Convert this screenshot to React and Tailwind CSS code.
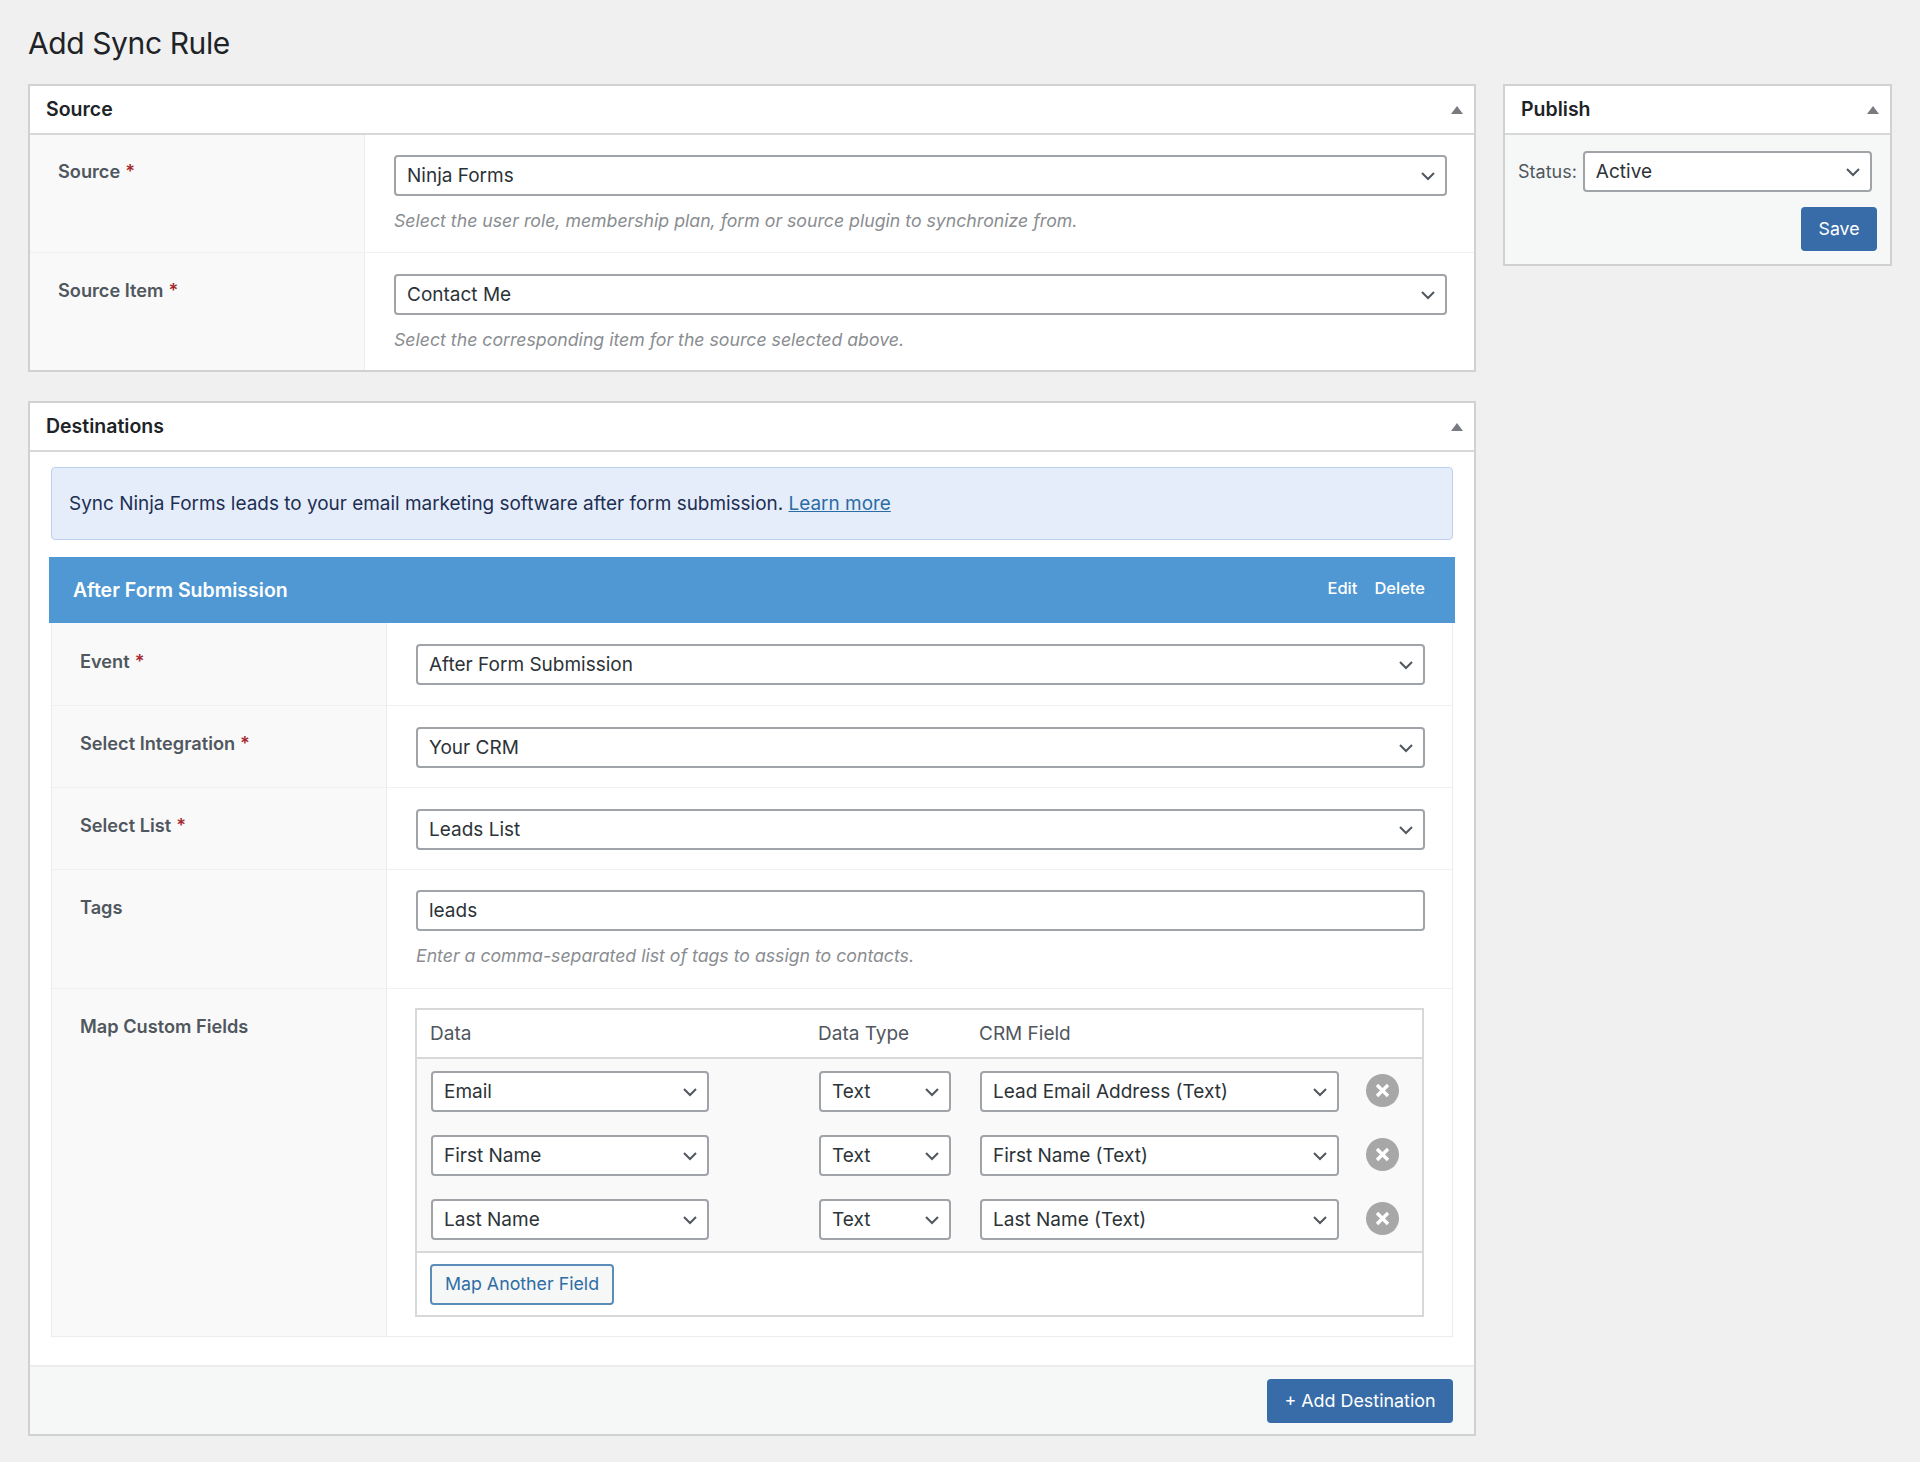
import React from 'react';

const Chevron = () => (
  <svg width="16" height="10" viewBox="0 0 16 10" fill="none" className="shrink-0">
    <path d="M2 2l6 6 6-6" stroke="#50575e" strokeWidth="2" />
  </svg>
);

const Triangle = () => (
  <svg width="12" height="8" viewBox="0 0 12 8" className="shrink-0">
    <path d="M6 0l6 8H0z" fill="#787c82" />
  </svg>
);

const Select = ({ value, className = '' }) => (
  <div className={`flex h-[41px] items-center justify-between rounded-[4px] border-2 border-[#a0a3a7] bg-white pl-[11px] pr-[9px] text-[19px] text-[#2c3338] ${className}`}>
    <span className="translate-y-px">{value}</span>
    <Chevron />
  </div>
);

const Help = ({ children }) => (
  <p className="mt-[15px] text-[17.7px] leading-[20px] text-[#8a8d91] italic">{children}</p>
);

const Label = ({ text, required }) => (
  <span className="block text-[18.2px] leading-[20px] font-semibold text-[#50575e]">
    {text}
    {required && <span className="ml-[5px] text-[#a4272d]">*</span>}
  </span>
);

const Row = ({ label, required, children, last, labelTop = 'pt-[27px]', pad = 'pt-[21px] pb-[19px]' }) => (
  <div className={`flex ${last ? '' : 'border-b border-[#f0f0f1]'}`}>
    <div className={`w-[335px] shrink-0 border-r border-[#ececed] bg-[#f9f9f9] pl-[28px] ${labelTop}`}>
      <Label text={label} required={required} />
    </div>
    <div className={`min-w-0 flex-1 pl-[29px] pr-[27px] ${pad}`}>{children}</div>
  </div>
);

const Card = ({ title, children, className = '' }) => (
  <div className={`border-2 border-[#d0d1d3] bg-white ${className}`}>
    <div className="flex h-[49px] items-center justify-between border-b-2 border-[#d7d8da] pl-[16px] pr-[11px]">
      <h2 className="text-[19.5px] font-semibold text-[#1d2327]">{title}</h2>
      <Triangle />
    </div>
    {children}
  </div>
);

const RemoveIcon = () => (
  <svg width="33" height="33" viewBox="0 0 33 33" className="shrink-0 -translate-y-[1px]">
    <circle cx="16.5" cy="16.5" r="16.5" fill="#a7a7a7" />
    <path d="M11 11l11 11M22 11L11 22" stroke="#fff" strokeWidth="3.4" />
  </svg>
);

const mappings = [
  { data: 'Email', crm: 'Lead Email Address (Text)' },
  { data: 'First Name', crm: 'First Name (Text)' },
  { data: 'Last Name', crm: 'Last Name (Text)' },
];

const App = () => {
  return (
    <div className="min-h-[1462px] bg-[#f0f0f1] pl-[28px] pr-[28px] pt-[24px] font-['Inter',sans-serif]">
      <h1 className="mb-[22px] h-[38px] text-[30px] leading-[38px] tracking-[-0.4px] text-[#1d2327]">Add Sync Rule</h1>

      <div className="flex items-start gap-[27px]">
        <div className="flex w-[1448px] shrink-0 flex-col gap-[29px]">
          <Card title="Source">
            <Row label="Source" required labelTop="pt-[26px]" pad="pt-[20px] pb-[21px]">
              <Select value="Ninja Forms" />
              <Help>Select the user role, membership plan, form or source plugin to synchronize from.</Help>
            </Row>
            <Row label="Source Item" required last pad="pt-[21px] pb-[20px]">
              <Select value="Contact Me" />
              <Help>Select the corresponding item for the source selected above.</Help>
            </Row>
          </Card>

          <Card title="Destinations">
            <div className="px-[21px] pt-[15px] pb-[28px]">
              <div className="flex h-[73px] items-center rounded-[4px] border border-[#bccfee] bg-[#e5edfb] px-[17px] pt-px text-[18.95px] text-[#1d2f52]">
                <span>
                  Sync Ninja Forms leads to your email marketing software after form submission.{' '}
                  <a href="#" className="text-[#2b6ca3] underline">Learn more</a>
                </span>
              </div>

              <div className="-mx-[2px] mt-[17px] flex h-[66px] items-center justify-between bg-[#4f98d3] pl-[24px] pr-[30px] text-white">
                <span className="translate-y-px text-[19.5px] font-semibold">After Form Submission</span>
                <div className="flex -translate-y-[2px] gap-[17px] text-[16.5px] font-medium">
                  <span>Edit</span>
                  <span>Delete</span>
                </div>
              </div>

              <div className="border-x border-b border-[#ececed]">
                <Row label="Event" required labelTop="pt-[28px]" pad="pt-[21px] pb-[20px]">
                  <Select value="After Form Submission" />
                </Row>
                <Row label="Select Integration" required>
                  <Select value="Your CRM" />
                </Row>
                <Row label="Select List" required>
                  <Select value="Leads List" />
                </Row>
                <Row label="Tags" pad="pt-[20px] pb-[22px]">
                  <div className="flex h-[41px] items-center rounded-[4px] border-2 border-[#a0a3a7] bg-white pl-[11px] text-[19px] text-[#2c3338]">
                    <span className="translate-y-px">leads</span>
                  </div>
                  <Help>Enter a comma-separated list of tags to assign to contacts.</Help>
                </Row>
                <Row label="Map Custom Fields" last pad="pt-[19px] pb-[19px]">
                  <div className="w-[1009px] -translate-x-px border-2 border-[#d7d8da]">
                    <div className="flex h-[49px] items-center border-b-2 border-[#d7d8da] pt-px text-[19px] text-[#50575e]">
                      <span className="w-[401px] pl-[13px]">Data</span>
                      <span className="w-[161px]">Data Type</span>
                      <span>CRM Field</span>
                    </div>
                    <div className="flex flex-col gap-[23px] bg-[#f9f9f9] px-[14px] pt-[12px] pb-[11px]">
                      {mappings.map((m) => (
                        <div key={m.data} className="flex items-center">
                          <Select value={m.data} className="w-[278px]" />
                          <Select value="Text" className="ml-[110px] w-[132px]" />
                          <Select value={m.crm} className="ml-[29px] w-[359px]" />
                          <div className="ml-[27px]">
                            <RemoveIcon />
                          </div>
                        </div>
                      ))}
                    </div>
                    <div className="h-[64px] border-t-2 border-[#d7d8da] pl-[13px] pt-[11px]">
                      <button className="h-[41px] w-[184px] rounded-[4px] border-2 border-[#5c8db8] bg-[#f6f7f7] text-[17.8px] text-[#2f6da4]">Map Another Field</button>
                    </div>
                  </div>
                </Row>
              </div>
            </div>

            <div className="flex h-[69px] items-start justify-end border-t-2 border-[#ececed] bg-[#f6f7f7] pr-[21px] pt-[12px]">
              <button className="h-[44px] w-[186px] rounded-[4px] bg-[#386ca8] text-[17.9px] text-white">+ Add Destination</button>
            </div>
          </Card>
        </div>

        <Card title="Publish" className="w-[389px] shrink-0">
          <div className="bg-[#f6f7f7] pb-[13px] pl-[13px] pr-[18px] pt-[16px]">
            <div className="flex items-center gap-[6px]">
              <span className="text-[18px] text-[#50575e]">Status:</span>
              <Select value="Active" className="flex-1" />
            </div>
            <div className="mt-[15px] flex justify-end">
              <button className="-mr-[5px] h-[44px] w-[76px] rounded-[4px] bg-[#386ca8] text-[17.7px] text-white">Save</button>
            </div>
          </div>
        </Card>
      </div>
    </div>
  );
};

export default App;
